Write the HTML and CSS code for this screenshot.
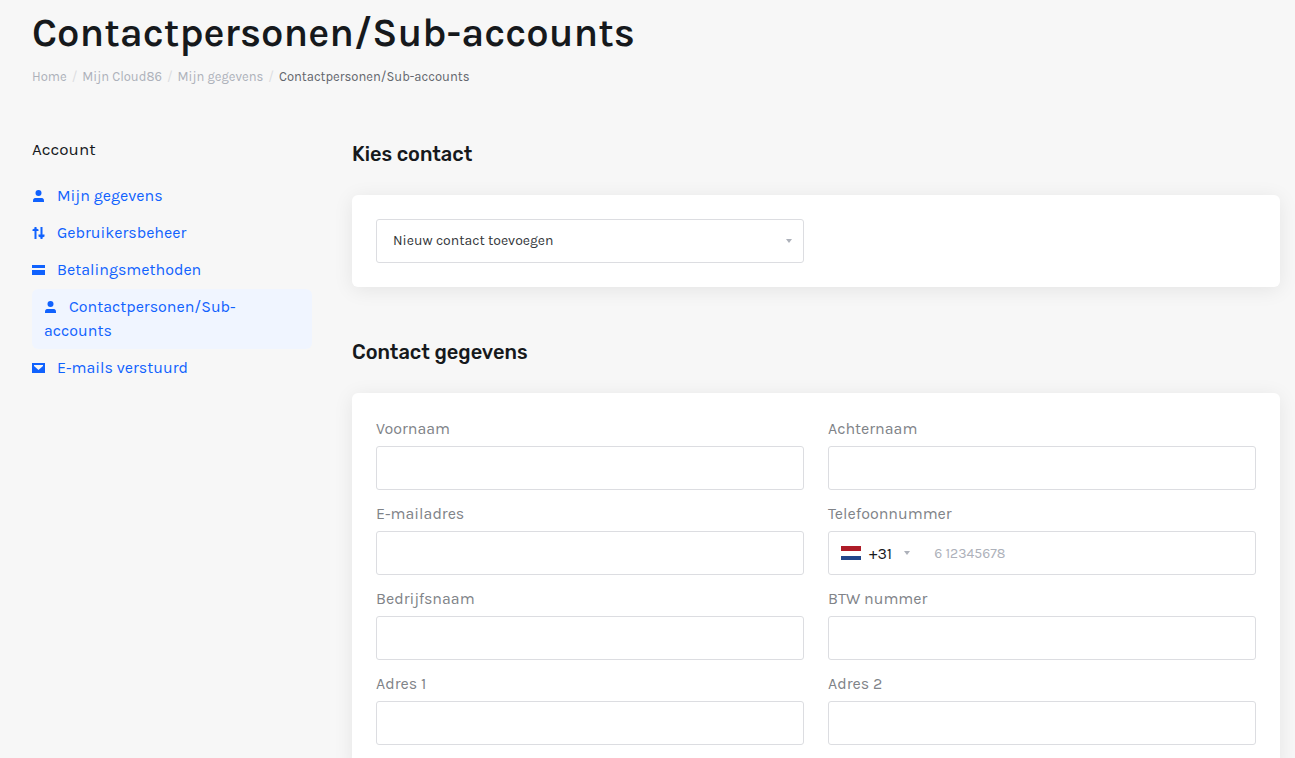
FILE: index.html
```html
<!DOCTYPE html>
<html lang="nl">
<head>
    <meta charset="UTF-8">
    <meta name="viewport" content="width=device-width, initial-scale=1.0">
    <title>Contactpersonen/Sub-accounts</title>
    <link rel="stylesheet" href="styles.css">
</head>
<body>
    <header class="page-header">
        <h1>Contactpersonen/Sub-accounts</h1>
        <nav>
            <ol class="breadcrumb">
                <li><a href="#">Home</a></li>
                <li><a href="#">Mijn Cloud86</a></li>
                <li><a href="#">Mijn gegevens</a></li>
                <li class="current">Contactpersonen/Sub-accounts</li>
            </ol>
        </nav>
    </header>

    <div class="layout">
        <aside class="sidebar">
            <h2 class="sidebar-title">Account</h2>
            <nav class="sidebar-nav">
                <a href="#"><svg class="icon" viewBox="0 0 14 14"><circle cx="6.500" cy="4" r="3"/><path d="M1 13v-1.500C1 9.500 2.500 9 4 9h5c1.500 0 3 .5 3 2.500V13z"/></svg>Mijn gegevens</a>
                <a href="#"><svg class="icon" viewBox="0 0 14 14"><path d="M2.500 1h2v1.500l2 1V5h-2v8h-2V5h-2V3.500l2-1zM8.500 1h2v7.500h2v2l-2 1V13h-2v-1.500l-2-1v-2h2z"/></svg>Gebruikersbeheer</a>
                <a href="#"><svg class="icon" viewBox="0 0 14 14"><path d="M0 2h13v3H0zM0 7h13v5H0z"/></svg>Betalingsmethoden</a>
                <a href="#" class="active"><svg class="icon" viewBox="0 0 14 14"><circle cx="6.500" cy="4" r="3"/><path d="M1 13v-1.500C1 9.500 2.500 9 4 9h5c1.500 0 3 .5 3 2.500V13z"/></svg>Contactpersonen/Sub-accounts</a>
                <a href="#"><svg class="icon" viewBox="0 0 14 14"><path fill-rule="evenodd" d="M0 2h13v10H0zM2 4v1l4.500 4L11 5V4z"/></svg>E-mails verstuurd</a>
            </nav>
        </aside>

        <main class="content">
            <section>
                <h2><label for="contact">Kies contact</label></h2>
                <div class="card">
                    <div class="form-grid">
                        <div class="select-wrap">
                            <select id="contact" class="form-control">
                                <option>Nieuw contact toevoegen</option>
                            </select>
                        </div>
                    </div>
                </div>
            </section>

            <section>
                <h2>Contact gegevens</h2>
                <form class="card form-grid">
                    <div class="form-group">
                        <label for="firstname">Voornaam</label>
                        <input type="text" id="firstname" class="form-control">
                    </div>
                    <div class="form-group">
                        <label for="lastname">Achternaam</label>
                        <input type="text" id="lastname" class="form-control">
                    </div>
                    <div class="form-group">
                        <label for="email">E-mailadres</label>
                        <input type="email" id="email" class="form-control">
                    </div>
                    <div class="form-group">
                        <label for="phone">Telefoonnummer</label>
                        <div class="form-control phone">
                            <button type="button" class="country">
                                <svg class="flag" viewBox="0 0 20 14"><path fill="#fff" d="M0 0h20v14H0z"/><path fill="#ae1c28" d="M0 0h20v5H0z"/><path fill="#21468b" d="M0 10h20v4H0z"/></svg>
                                <span>+31</span>
                                <i class="caret"></i>
                            </button>
                            <input type="tel" id="phone" placeholder="6 12345678">
                        </div>
                    </div>
                    <div class="form-group">
                        <label for="company">Bedrijfsnaam</label>
                        <input type="text" id="company" class="form-control">
                    </div>
                    <div class="form-group">
                        <label for="vat">BTW nummer</label>
                        <input type="text" id="vat" class="form-control">
                    </div>
                    <div class="form-group">
                        <label for="address1">Adres 1</label>
                        <input type="text" id="address1" class="form-control">
                    </div>
                    <div class="form-group">
                        <label for="address2">Adres 2</label>
                        <input type="text" id="address2" class="form-control">
                    </div>
                </form>
            </section>
        </main>
    </div>
</body>
</html>
```
FILE: styles.css
```css
:root {
    --primary: #1062fe;
    --heading: #16191c;
    --text: #62656c;
    --muted: #808388;
    --light: #adb1ba;
    --border: #dcdde1;
    --background: #f7f7f7;
}
* {
    box-sizing: border-box;
}
body {
    margin: 0;
    padding: 8px 15px 24px 32px;
    background-color: var(--background);
    color: var(--text);
    font-family: Karla, Inter, sans-serif;
    font-size: 16px;
    line-height: 24px;
}
a {
    color: var(--primary);
    text-decoration: none;
}
h1, h2 {
    margin: 0;
    color: var(--heading);
}
h1 {
    font-size: 40px;
    font-weight: 600;
    line-height: 50px;
}
.breadcrumb {
    display: flex;
    flex-wrap: wrap;
    margin: 9px 0 0;
    padding: 0;
    list-style: none;
    font-size: 13px;
    line-height: 20px;
}
.breadcrumb a {
    color: var(--light);
}
.breadcrumb li + li::before {
    content: "/";
    padding: 0 5px;
    color: var(--border);
}
.layout {
    display: grid;
    grid-template-columns: 280px minmax(0, 1fr);
    gap: 40px;
    margin-top: 50px;
}
.sidebar-title {
    margin-bottom: 17px;
    font-size: 17px;
    font-weight: 400;
    line-height: 24px;
}
.sidebar-nav {
    display: flex;
    flex-direction: column;
    gap: 1px;
}
.sidebar-nav a {
    padding: 6px 0;
    border-radius: 6px;
}
.sidebar-nav .active {
    padding: 6px 12px;
    background-color: #f0f5ff;
}
.icon {
    width: 14px;
    height: 14px;
    margin-right: 11px;
    fill: currentColor;
    vertical-align: -2px;
}
.content {
    display: flex;
    flex-direction: column;
    gap: 48px;
}
.content h2 {
    margin-bottom: 24px;
    font-family: Rubik, Roboto, sans-serif;
    font-size: 20px;
    font-weight: 500;
    line-height: 34px;
}
.card {
    padding: 24px;
    border-radius: 6px;
    background-color: #fff;
    box-shadow: 0 3px 20px rgba(0, 0, 0, 0.08);
}
.form-grid {
    display: grid;
    grid-template-columns: repeat(2, minmax(0, 1fr));
    gap: 12px 24px;
}
.form-group label {
    display: block;
    margin-bottom: 5px;
    color: var(--muted);
}
.form-control {
    display: block;
    width: 100%;
    height: 44px;
    padding: 0 16px;
    border: 1px solid var(--border);
    border-radius: 3px;
    background-color: #fff;
    color: #33363a;
    font-family: inherit;
    font-size: 14px;
}
select.form-control {
    padding-bottom: 2px;
    appearance: none;
}
.form-control:focus {
    outline: none;
    border-color: var(--primary);
}
.select-wrap {
    position: relative;
}
.select-wrap::after, .caret {
    width: 0;
    border: 3px solid transparent;
    border-top: 4px solid var(--light);
    border-bottom: 0;
}
.select-wrap::after {
    content: "";
    position: absolute;
    top: 20px;
    right: 12px;
    pointer-events: none;
}
.phone {
    display: flex;
    padding: 0 12px;
}
.country {
    display: flex;
    align-items: center;
    padding: 0;
    border: 0;
    background: none;
    color: var(--heading);
    font-family: inherit;
    font-size: 16px;
    cursor: pointer;
}
.flag {
    width: 20px;
    height: 14px;
    margin-right: 8px;
}
.caret {
    margin-left: 12px;
}
.phone input {
    flex: 1;
    min-width: 0;
    padding: 0 0 0 24px;
    border: 0;
    outline: none;
    background: none;
    font-family: inherit;
    font-size: 14px;
}
.phone input::placeholder {
    color: var(--light);
}
```
